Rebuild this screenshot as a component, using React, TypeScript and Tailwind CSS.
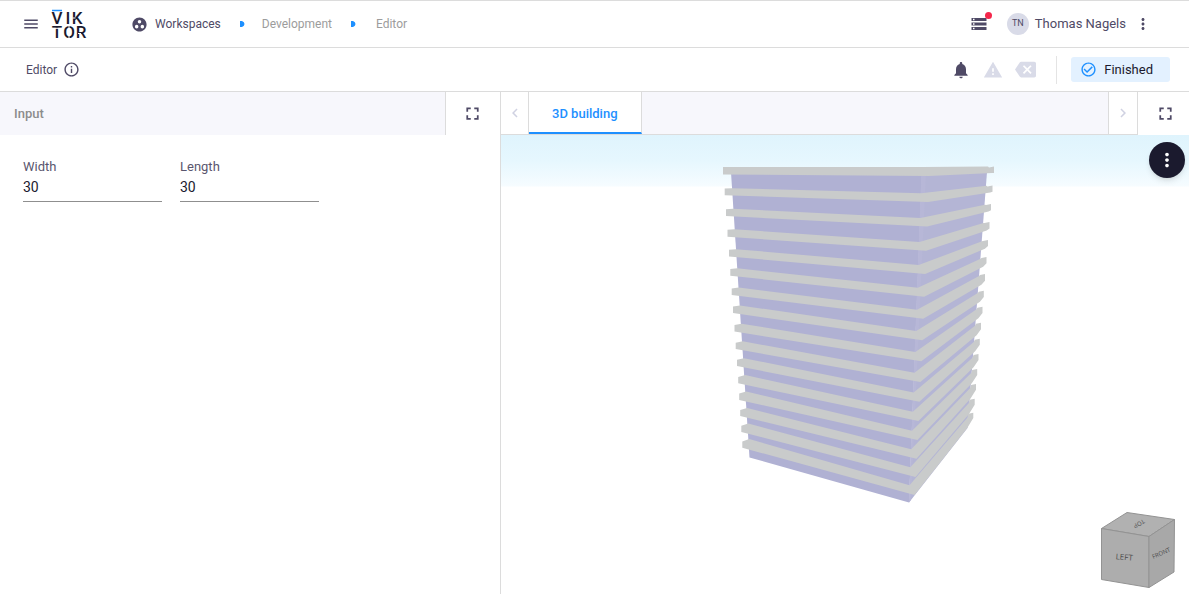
import React, { useState } from "react";
import {
  MdBackspace,
  MdCheckCircleOutline,
  MdChevronLeft,
  MdChevronRight,
  MdFullscreen,
  MdGroupWork,
  MdInfoOutline,
  MdMenu,
  MdMoreVert,
  MdNotifications,
  MdStorage,
  MdWarning,
} from "react-icons/md";

// one row per floor slab, top to bottom:
// left x, top, bottom | wall corner top, slab corner bottom | right x, top, bottom
const slabs = [
  [723, 167, 174.5, 167, 176, 994, 166.5, 173],
  [724.7, 188.3, 195.3, 193.3, 202, 992.5, 185.5, 192],
  [726, 209, 216, 218, 226.5, 991, 204, 210.5],
  [727.5, 229.5, 236.7, 242, 250.8, 989.5, 222, 229],
  [729, 249.5, 256.5, 265, 274, 988, 240, 246.5],
  [730.3, 268.7, 275.7, 287.7, 296.7, 986.5, 257, 264],
  [731.7, 288, 295, 309.7, 318.7, 985, 274, 281.5],
  [733, 306, 313, 331, 340.3, 983.8, 290.7, 298],
  [734.5, 324.3, 331.5, 352, 361.3, 982.5, 306.7, 314],
  [735.7, 342, 349, 372.7, 382, 981, 322.7, 330.5],
  [737, 359, 366, 392.5, 401.7, 979.8, 338.7, 346],
  [738.2, 376, 383.3, 411.7, 421, 978.5, 354, 361.5],
  [739.2, 392.5, 400, 430.7, 440, 977.2, 369, 376.5],
  [740.2, 409, 415.9, 449.3, 458.7, 976, 384, 391.5],
  [741.3, 424.7, 431.9, 467.3, 477, 974.7, 398.7, 406.5],
  [742.3, 440.3, 447.7, 485.3, 495, 973.3, 412.7, 420],
];

const slabPoints = (row: number[], i: number) => {
  const [lx, lt, lb, ct, cb, rx, rt, rb] = row;
  const t = i / (slabs.length - 1);
  const wallX = 922 - 12.5 * t;
  const cornerX = 929 - 14.5 * t;
  const lift = 2.5 * t;
  return [
    [lx, lt + lift / 2], [lx + 7, lt - lift / 2], [wallX, ct], [rx - 6, rt + 5 * t],
    [rx - 5, rt + 1], [rx, rt], [rx, rb - 2 * t], [rx - 2 - 4 * t, rb + 8 * t], [cornerX, cb], [lx, lb],
  ].map(p => p.join(",")).join(" ");
};

const Building: React.FC = () => (
  <svg viewBox="723 166 272 338" className="h-[338px] w-[272px]" role="img" aria-label="3D building">
    <polygon points="731,172 922,172 909,502.5 749.5,457.5" fill="#b0b1d3" />
    <polygon points="921.5,172 987,172 967.5,428 909,502.5" fill="#b4b5d5" />
    <polygon points="921.5,172 926,172 911,500 909,502.5" fill="#b7b7d7" />
    {slabs.map((row, i) => <polygon key={i} points={slabPoints(row, i)} fill="#c9cbcb" />)}
  </svg>
);

const Logo: React.FC = () => (
  <svg viewBox="0 0 36 30" className="h-[30px] w-9 overflow-visible" role="img" aria-label="Viktor">
    <g fill="#1b1a2e" fontFamily="Roboto, sans-serif" fontSize="17" fontWeight="500" textAnchor="middle">
      <text x="5" y="15">V</text>
      <text x="16" y="15">I</text>
      <text x="25" y="15">K</text>
      <text x="5" y="29">T</text>
      <text x="17" y="29">O</text>
      <text x="29" y="29">R</text>
    </g>
    <path d="M17 16v3M17 27v3M26 24.5h3M20.5 9h3M0 19.3h10" stroke="#fff" strokeWidth="1" />
    <path d="M0 1.5h10" stroke="#1e90ff" strokeWidth="1.5" />
  </svg>
);

const ViewCube: React.FC = () => (
  <svg viewBox="0 0 76 78" className="h-[78px] w-[76px]" role="img" aria-label="View cube">
    <g stroke="#939393" strokeWidth="1" strokeLinejoin="round">
      <polygon points="1.5,17.5 27,1.5 74.5,8.5 49,25.5" fill="#b1b1b1" />
      <polygon points="1.5,17.5 49,25.5 49,76.5 1.5,68.5" fill="#adadad" />
      <polygon points="49,25.5 74.5,8.5 74,61 49,76.5" fill="#a8a8a8" />
    </g>
    <g fill="#4c4c4c" fontFamily="Open Sans, sans-serif" textAnchor="middle">
      <text fontSize="8" transform="translate(24 49) rotate(5)">LEFT</text>
      <text fontSize="6" transform="translate(62 44) rotate(-24)">FRONT</text>
      <text fontSize="6" transform="translate(38 11) rotate(150)">TOP</text>
    </g>
  </svg>
);

const CrumbArrow: React.FC = () => (
  <svg viewBox="0 0 5 6" className="h-[6px] w-[5px]" aria-hidden="true">
    <path d="M0 0h2q2.5 1 2.5 3t-2.5 3H0z" fill="#1e90ff" />
  </svg>
);

const NumberField: React.FC<{ id: string; label: string }> = ({ id, label }) => {
  const [value, setValue] = useState("30");
  return (
    <div className="w-[139px]">
      <label htmlFor={id} className="block text-[13px] leading-5 text-[#5a566e]">{label}</label>
      <input
        id={id}
        value={value}
        onChange={e => setValue(e.target.value)}
        className="block h-[25px] w-full border-b border-[#8f8f8f] pb-[5px] text-sm text-[#1b1a2e] outline-none"
      />
    </div>
  );
};

const App: React.FC = () => {
  return (
    <div className="flex min-h-screen flex-col bg-white font-['Roboto',sans-serif] text-[13px] text-[#4f4a66]">
      <header className="flex h-12 items-center border-y border-[#dcdcdc] pr-[37px] pl-[22px]">
        <button type="button" aria-label="Menu"><MdMenu size={18} /></button>
        <a href="#home" className="ml-3"><Logo /></a>
        <nav aria-label="Breadcrumb" className="ml-[43px] flex items-center text-xs">
          <a href="#workspaces" className="flex items-center gap-[7px]">
            <MdGroupWork size={17} />Workspaces
          </a>
          <span className="mr-[17px] ml-[19px]"><CrumbArrow /></span>
          <a href="#development" className="text-[#9c9c9c]">Development</a>
          <span className="mr-5 ml-[19px]"><CrumbArrow /></span>
          <a href="#editor" className="text-[#9c9c9c]">Editor</a>
        </nav>
        <div className="ml-auto flex items-center">
          <button type="button" aria-label="Jobs" className="relative mr-[19px]">
            <MdStorage size={18} />
            <span className="absolute -top-[3px] -right-1 size-[7px] rounded-full bg-[#f5274b]" />
          </button>
          <span className="mr-[6px] flex size-[22px] items-center justify-center rounded-full bg-[#d9dbe8] text-[9px]">TN</span>
          <span>Thomas Nagels</span>
          <button type="button" aria-label="User menu" className="ml-2"><MdMoreVert size={18} /></button>
        </div>
      </header>

      <div className="flex h-11 items-center border-b border-[#dcdcdc] pr-[19px] pl-[26px]">
        <h1 className="text-xs">Editor</h1>
        <button type="button" aria-label="Info" className="ml-[6px]"><MdInfoOutline size={17} /></button>
        <div className="ml-auto flex items-center gap-3">
          <button type="button" aria-label="Notifications"><MdNotifications size={20} /></button>
          <button type="button" aria-label="Warnings" className="text-[#d9dbe8]"><MdWarning size={20} /></button>
          <button type="button" aria-label="Errors" className="text-[#d9dbe8]"><MdBackspace size={21} /></button>
        </div>
        <div className="ml-5 h-7 border-l border-[#e4e4e4]" />
        <div className="ml-[14px] flex h-[25px] items-center gap-[7px] rounded-[3px] bg-[#e3f1ff] pr-[17px] pl-[9px] text-[#1b1a2e]">
          <MdCheckCircleOutline size={17} className="text-[#1e90ff]" />Finished
        </div>
      </div>

      <main className="grid flex-1 grid-cols-[501fr_688fr]">
        <section className="border-r border-[#dcdcdc]">
          <div className="flex h-[43px]">
            <h2 className="flex flex-1 items-center border-r border-[#dcdcdc] bg-[#f7f7fc] pl-[14px] font-medium text-[#8c8c8c]">Input</h2>
            <button type="button" aria-label="Expand input" className="flex w-[54px] items-center justify-center pr-px"><MdFullscreen size={21} /></button>
          </div>
          <form className="flex gap-[18px] px-[23px] pt-[22px]">
            <NumberField id="width" label="Width" />
            <NumberField id="length" label="Length" />
          </form>
        </section>

        <section className="flex flex-col">
          <div className="flex h-[43px]">
            <div className="flex flex-1 border-b border-[#dcdcdc]">
              <button type="button" aria-label="Previous tab" className="flex w-7 items-center justify-center border-r border-[#dcdcdc] text-[#d0d2e2]"><MdChevronLeft size={18} /></button>
              <div role="tablist" className="flex flex-1 bg-[#f7f7fc]">
                <button type="button" role="tab" aria-selected="true" className="border-r border-b-2 border-r-[#dcdcdc] border-b-[#1e90ff] bg-white px-[23px] pt-[3px] font-medium text-[#1e90ff]">3D building</button>
              </div>
              <button type="button" aria-label="Next tab" className="flex w-[30px] items-center justify-center border-x border-[#dcdcdc] text-[#d0d2e2]"><MdChevronRight size={18} /></button>
            </div>
            <button type="button" aria-label="Expand view" className="flex w-[51px] items-center justify-center pl-[3px]"><MdFullscreen size={21} /></button>
          </div>
          <div className="relative flex flex-1 justify-center bg-[linear-gradient(#dff4fd_0px,#e6f7fe_26px,#f6fcff_51px,#fff_52px)] pt-[31px] pl-7">
            <Building />
            <button type="button" aria-label="View options" className="absolute top-[7px] right-1 flex size-9 items-center justify-center rounded-full bg-[#1b1a2e] text-white shadow-md">
              <MdMoreVert size={22} />
            </button>
            <div className="absolute right-[13px] bottom-[5px]"><ViewCube /></div>
          </div>
        </section>
      </main>
    </div>
  );
};

export default App;
